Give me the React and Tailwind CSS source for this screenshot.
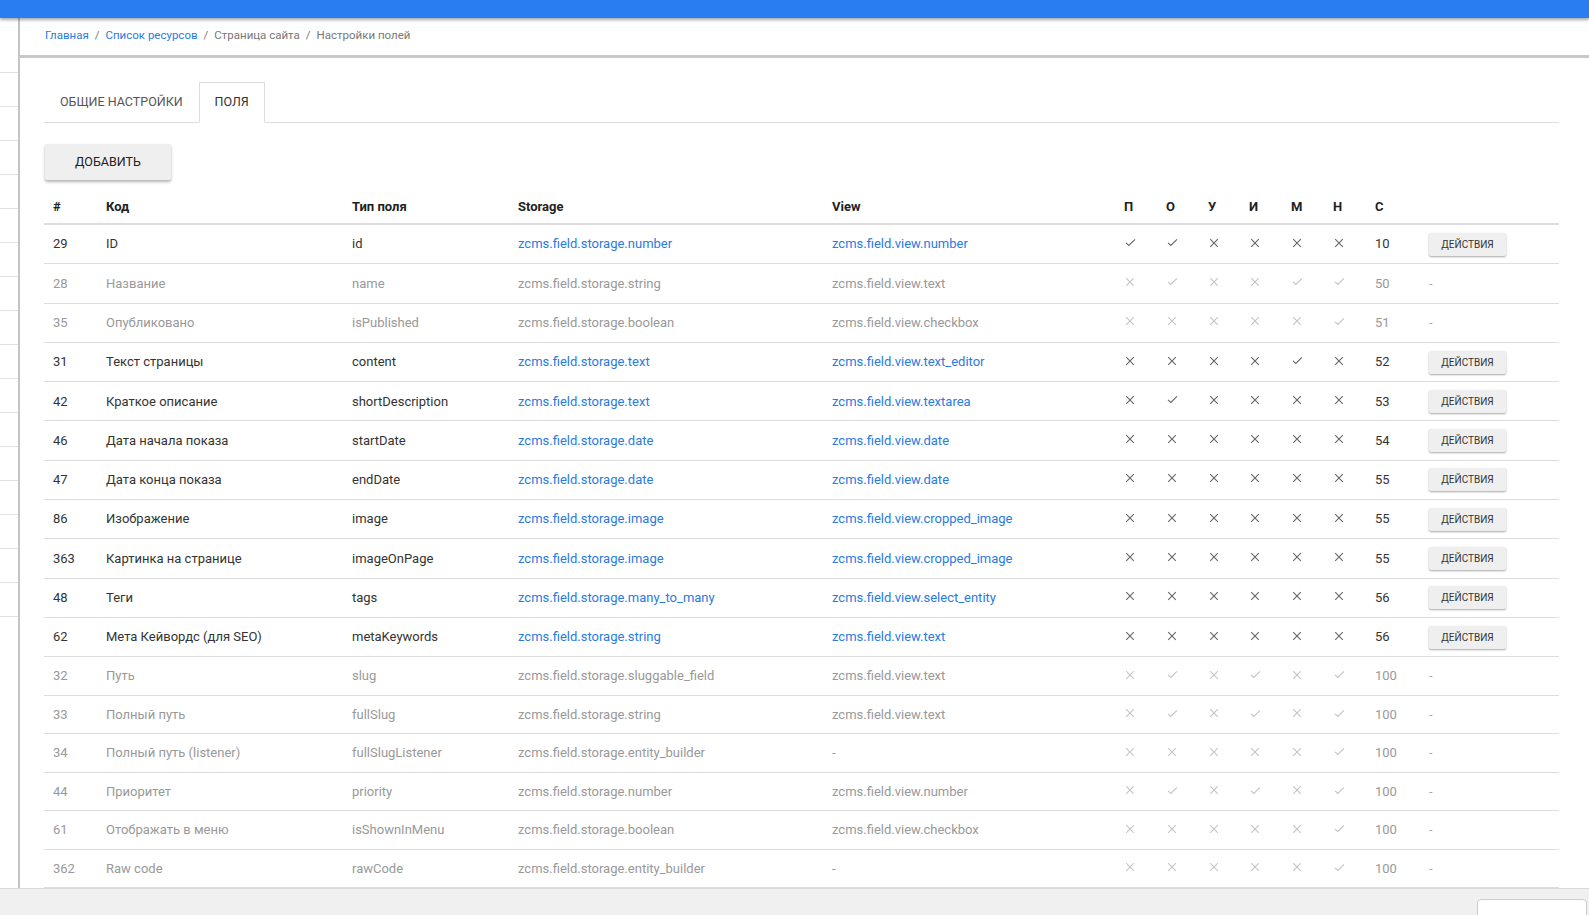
import React from "react";

const rows = [
  { id: 29, name: "ID", code: "id", st: "number", vw: "number", f: "110000", s: 10, a: true },
  { id: 28, name: "Название", code: "name", st: "string", vw: "text", f: "010011", s: 50, a: false },
  { id: 35, name: "Опубликовано", code: "isPublished", st: "boolean", vw: "checkbox", f: "000001", s: 51, a: false },
  { id: 31, name: "Текст страницы", code: "content", st: "text", vw: "text_editor", f: "000010", s: 52, a: true },
  { id: 42, name: "Краткое описание", code: "shortDescription", st: "text", vw: "textarea", f: "010000", s: 53, a: true },
  { id: 46, name: "Дата начала показа", code: "startDate", st: "date", vw: "date", f: "000000", s: 54, a: true },
  { id: 47, name: "Дата конца показа", code: "endDate", st: "date", vw: "date", f: "000000", s: 55, a: true },
  { id: 86, name: "Изображение", code: "image", st: "image", vw: "cropped_image", f: "000000", s: 55, a: true },
  { id: 363, name: "Картинка на странице", code: "imageOnPage", st: "image", vw: "cropped_image", f: "000000", s: 55, a: true },
  { id: 48, name: "Теги", code: "tags", st: "many_to_many", vw: "select_entity", f: "000000", s: 56, a: true },
  { id: 62, name: "Мета Кейвордс (для SEO)", code: "metaKeywords", st: "string", vw: "text", f: "000000", s: 56, a: true },
  { id: 32, name: "Путь", code: "slug", st: "sluggable_field", vw: "text", f: "010101", s: 100, a: false },
  { id: 33, name: "Полный путь", code: "fullSlug", st: "string", vw: "text", f: "010101", s: 100, a: false },
  { id: 34, name: "Полный путь (listener)", code: "fullSlugListener", st: "entity_builder", vw: null, f: "000001", s: 100, a: false },
  { id: 44, name: "Приоритет", code: "priority", st: "number", vw: "number", f: "010101", s: 100, a: false },
  { id: 61, name: "Отображать в меню", code: "isShownInMenu", st: "boolean", vw: "checkbox", f: "000001", s: 100, a: false },
  { id: 362, name: "Raw code", code: "rawCode", st: "entity_builder", vw: null, f: "000001", s: 100, a: false },
];

function Check({ active }) {
  return (
    <svg width="11" height="9" viewBox="0 0 11 9" className={active ? "text-[#666]" : "text-[#c4c4c4]"}>
      <path d="M1 4.8 L3.8 7.4 L10 1.4" fill="none" stroke="currentColor" strokeWidth="1.1" />
    </svg>
  );
}

function Cross({ active }) {
  return (
    <svg width="10" height="10" viewBox="0 0 10 10" className={active ? "text-[#666]" : "text-[#c4c4c4]"}>
      <path d="M1.2 1.2 L8.8 8.8 M8.8 1.2 L1.2 8.8" fill="none" stroke="currentColor" strokeWidth="1.1" />
    </svg>
  );
}

const cols = "grid grid-cols-[53px_246px_166px_314px_292px_42px_42px_41px_42px_42px_42px_54px_1fr]";

export default function App() {
  return (
    <div className="w-[1589px] h-[915px] overflow-hidden bg-white flex flex-col text-[13px] text-[#333]" style={{ fontFamily: "Roboto, 'Noto Sans', sans-serif" }}>
      <div className="h-[18px] bg-[#2a7df1] shrink-0 shadow-[0_2px_3px_rgba(0,0,0,0.35)] relative z-10" />
      <div className="flex flex-1 min-h-0">
        <div className="w-[20px] shrink-0 border-r-2 border-[#c4c4c4] flex flex-col pt-[21px]">
          {Array.from({ length: 17 }).map((_, i) => (
            <div key={i} className="h-[34px] shrink-0 border-b border-[#e2e2e2]" />
          ))}
        </div>
        <div className="flex-1 flex flex-col min-w-0 overflow-hidden">
          <div className="h-[40px] shrink-0 border-b-[3px] border-[#c8c8c8] flex items-center pl-[25px] pb-[1px] text-[11.5px] text-[#777] gap-[6px]">
            <span className="text-[#2a7ae2]">Главная</span>
            <span>/</span>
            <span className="text-[#2a7ae2]">Список ресурсов</span>
            <span>/</span>
            <span>Страница сайта</span>
            <span>/</span>
            <span>Настройки полей</span>
          </div>
          <div className="flex-1 pl-[24px] pr-[8px] pt-[25px] flex flex-col">
            <div className="flex items-end border-b border-[#ddd] h-[40px] w-[1515px]">
              <div className="px-[16px] h-[40px] flex items-center text-[#555] text-[12.5px]">ОБЩИЕ НАСТРОЙКИ</div>
              <div className="px-[15px] h-[41px] mb-[-1px] flex items-center border border-b-white border-[#ddd] bg-white text-[#333] text-[12.5px]">ПОЛЯ</div>
            </div>
            <div className="mt-[21px] ml-[1px]">
              <button className="w-[126px] h-[36px] bg-[#efefef] text-[#222] text-[12.5px] shadow-[0_2px_3px_rgba(0,0,0,0.3)] rounded-[2px]">ДОБАВИТЬ</button>
            </div>
            <div className="mt-[11px] w-[1515px]">
              <div className={`${cols} h-[34px] items-center font-bold border-b-[2px] border-[#ddd] text-[#222]`}>
                <div className="pl-[9px]">#</div>
                <div className="pl-[9px]">Код</div>
                <div className="pl-[9px]">Тип поля</div>
                <div className="pl-[9px]">Storage</div>
                <div className="pl-[9px]">View</div>
                {["П", "О", "У", "И", "М", "Н"].map((h) => (
                  <div key={h} className="pl-[9px]">{h}</div>
                ))}
                <div className="pl-[9px]">С</div>
                <div />
              </div>
              {rows.map((r, idx) => {
                const txt = r.a ? "text-[#333]" : "text-[#999]";
                const link = r.a ? "text-[#2a7ae2]" : "text-[#999]";
                return (
                  <div key={r.id} className={`${cols} ${idx < 11 ? "h-[39.3px]" : "h-[38.5px]"} items-center border-b border-[#ddd] ${txt}`}>
                    <div className="pl-[9px]">{r.id}</div>
                    <div className="pl-[9px]">{r.name}</div>
                    <div className="pl-[9px]">{r.code}</div>
                    <div className={`pl-[9px] ${link}`}>zcms.field.storage.{r.st}</div>
                    <div className={`pl-[9px] ${r.vw ? link : txt}`}>{r.vw ? `zcms.field.view.${r.vw}` : "-"}</div>
                    {r.f.split("").map((c, i) => (
                      <div key={i} className="pl-[10px] flex items-center h-full pb-[3px]">
                        {c === "1" ? <Check active={r.a} /> : <Cross active={r.a} />}
                      </div>
                    ))}
                    <div className="pl-[9px]">{r.s}</div>
                    <div className="pl-[9px]">
                      {r.a ? (
                        <button className="w-[77px] h-[23px] bg-[#efefef] text-[#333] text-[10px] rounded-[2px] shadow-[0_1px_2px_rgba(0,0,0,0.35)]">ДЕЙСТВИЯ</button>
                      ) : (
                        <span className="text-[#aaa]">-</span>
                      )}
                    </div>
                  </div>
                );
              })}
            </div>
          </div>
        </div>
      </div>
      <div className="h-[27px] shrink-0 bg-[#f0f0f0] border-t border-[#d8d8d8] flex justify-end items-start pt-[10px] pr-[2px]">
        <div className="w-[110px] h-[20px] bg-white border border-[#ccc] rounded-[4px]" />
      </div>
    </div>
  );
}
